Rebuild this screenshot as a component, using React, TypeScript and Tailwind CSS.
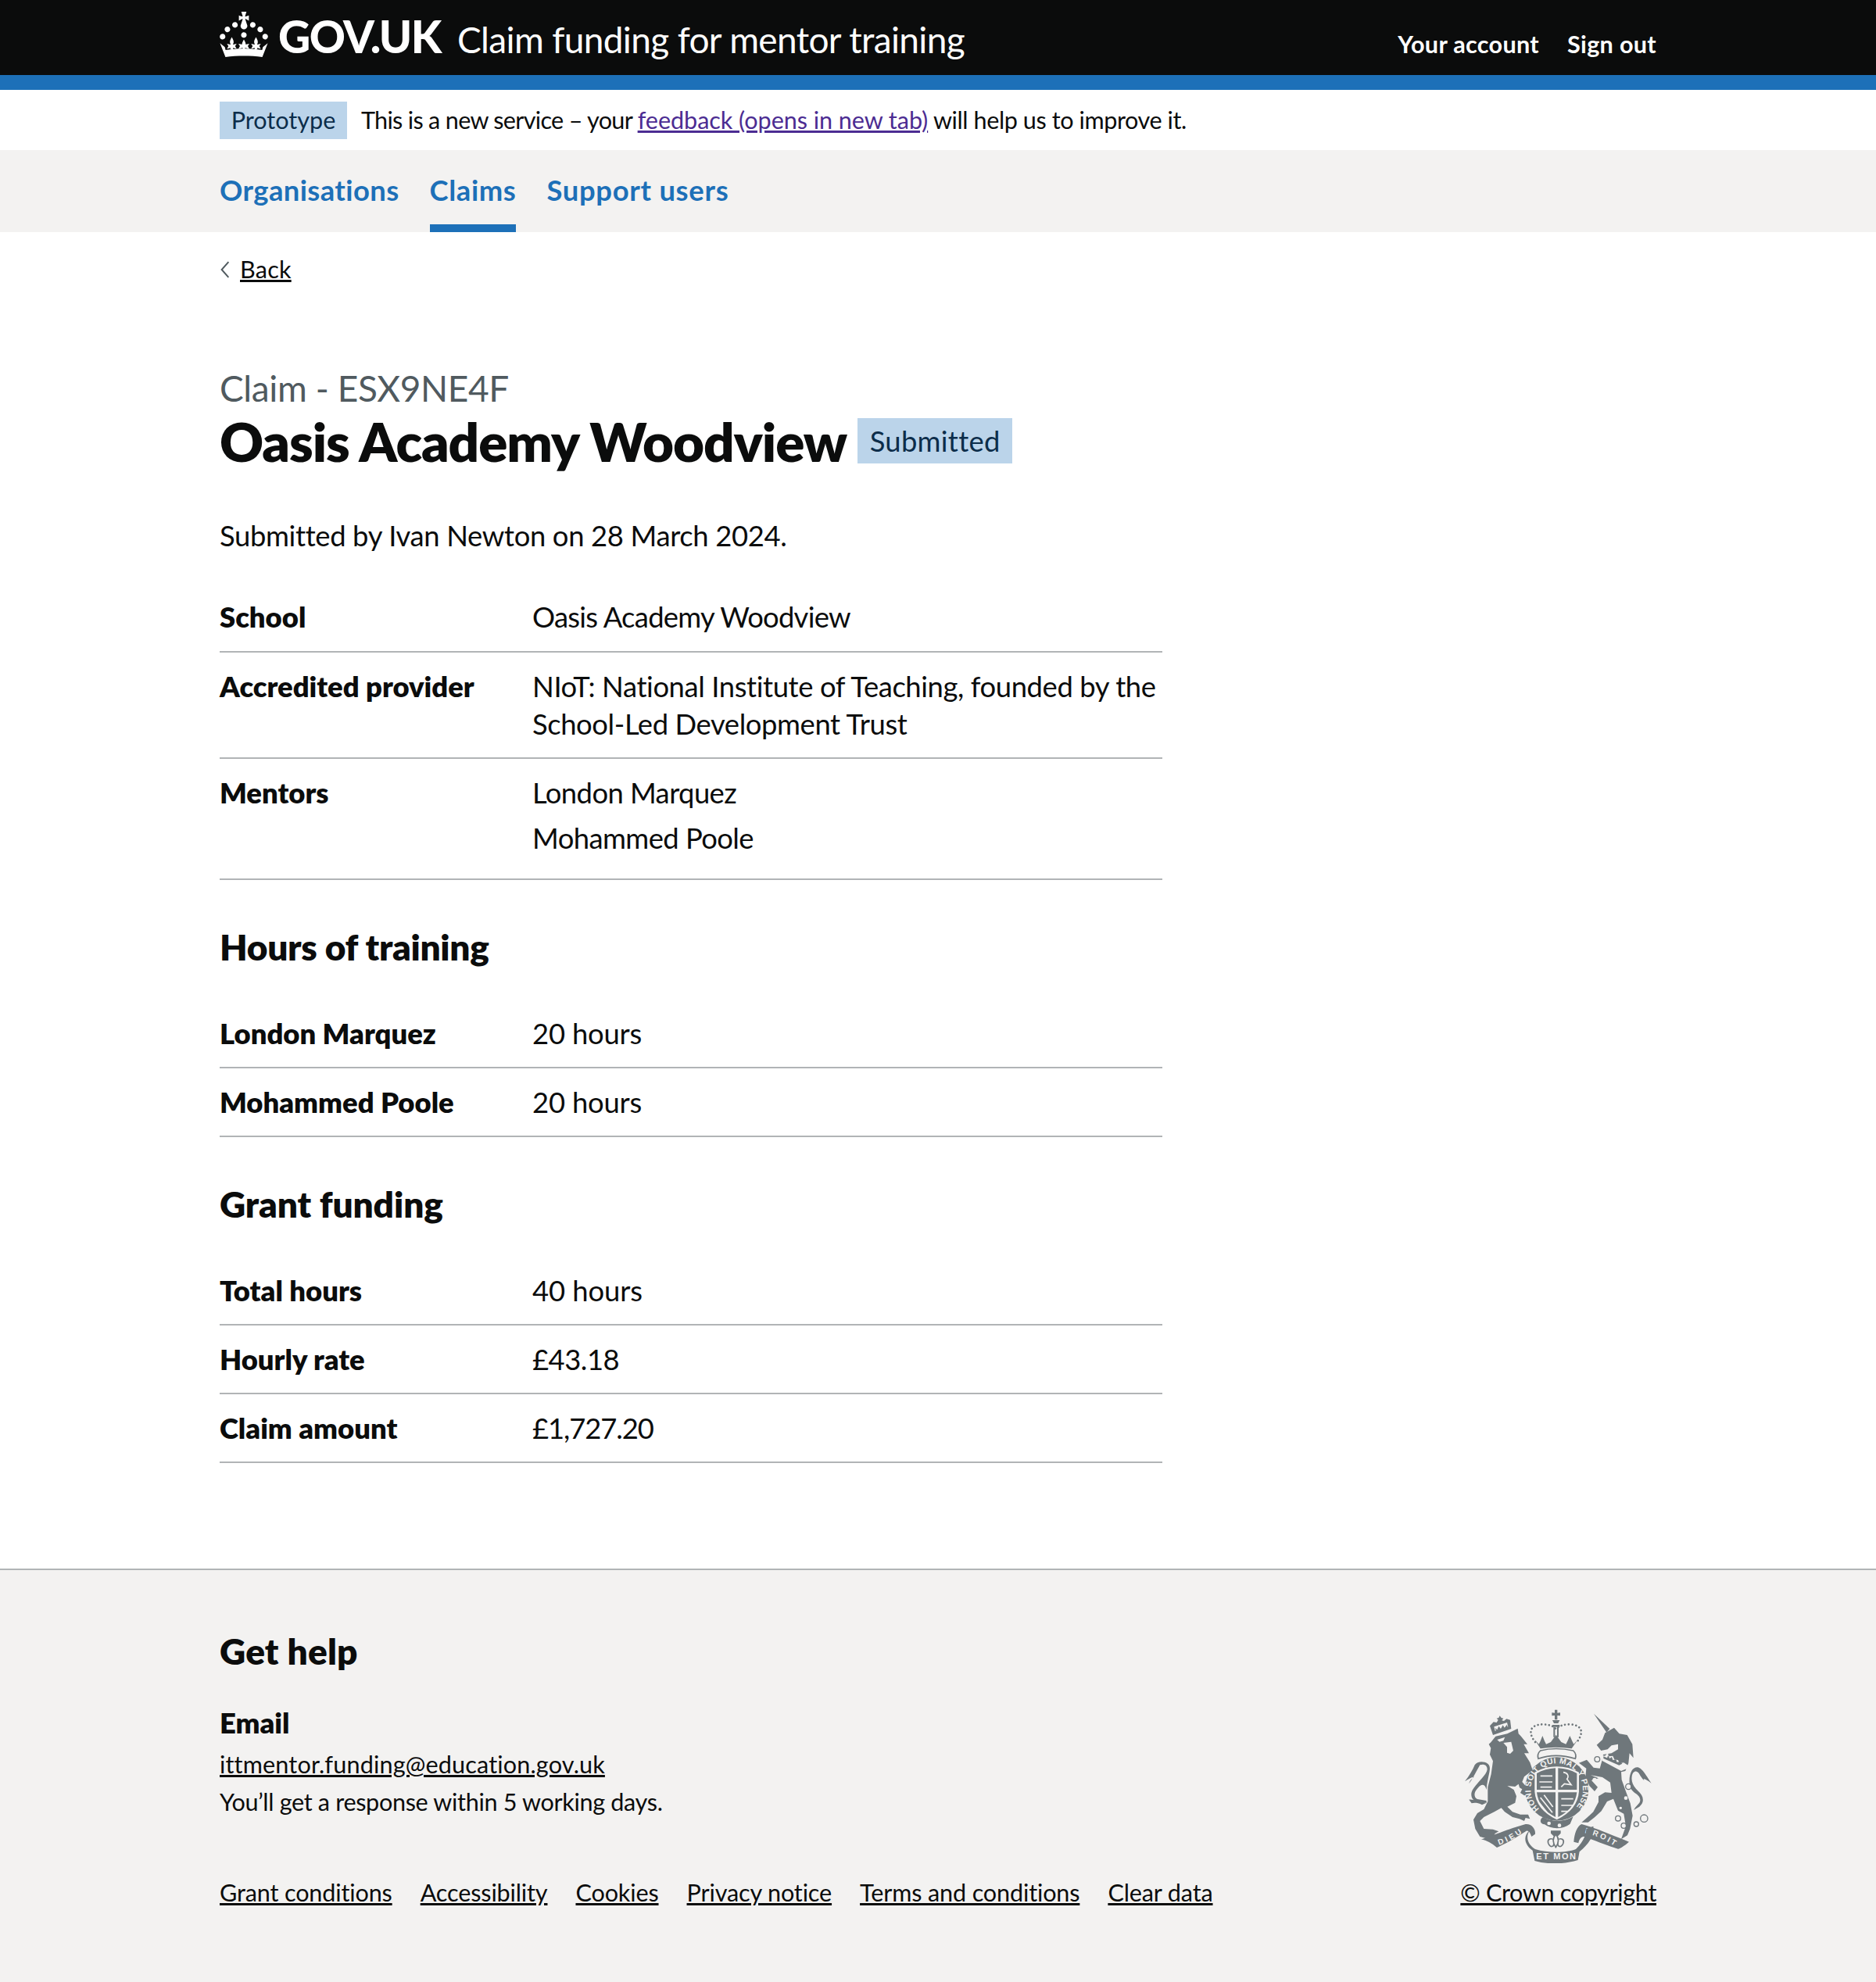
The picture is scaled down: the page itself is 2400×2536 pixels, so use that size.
import React from 'react';

function Fleur({ x, top, arm }: { x: number; top: number; arm: number }) {
  return (
    <>
      <path d={`M${x} ${top}c1 1.6 1.3 2.7 1.2 3.6-.1.6-.4 1-.5 1.4l.2 3h-1.8l.2-3c-.1-.4-.4-.8-.5-1.4-.1-.9.2-2 1.2-3.6z`} />
      <path d={`M${x - arm} 21.2l${arm - 0.9} .5h1.8l${arm - 0.9}-.5-1 1.6 1 1.8-${arm - 0.9}-.7h-1.8l-${arm - 0.9}.7 1-1.8z`} />
    </>
  );
}

function CrownLogo({ className }: { className: string }) {
  return (
    <svg viewBox="0 0 32 30" className={className} fill="#fff">
      <path d="M22.6 10.4c-1 .4-2-.1-2.4-1-.4-.9.1-2 1-2.4.9-.4 2 .1 2.4 1s-.1 2-1 2.4m-5.9 6.7c-.9.4-2-.1-2.4-1-.4-.9.1-2 1-2.4.9-.4 2 .1 2.4 1s-.1 2-1 2.4m10.8-3.7c-1 .4-2-.1-2.4-1-.4-.9.1-2 1-2.4.9-.4 2 .1 2.4 1s0 2-1 2.4m3.3 4.8c-1 .4-2-.1-2.4-1-.4-.9.1-2 1-2.4.9-.4 2 .1 2.4 1s-.1 2-1 2.4M17 4.7l2.3 1.2V2.5l-2.3.7-.2-.2.9-3h-3.4l.9 3-.2.2c-.1.1-2.3-.7-2.3-.7v3.4L15 4.7c.1.1.1.2.2.2l-1.3 4c-.1.2-.1.4-.1.6 0 1.1.8 2 1.9 2.2h.7c1-.2 1.9-1.1 1.9-2.2 0-.2 0-.4-.1-.6l-1.3-4c-.1-.1 0-.2.1-.2m-7.6 5.7c.9.4 2-.1 2.4-1 .4-.9-.1-2-1-2.4-.9-.4-2 .1-2.4 1s0 2 1 2.4m-5 3c.9.4 2-.1 2.4-1 .4-.9-.1-2-1-2.4-.9-.4-2 .1-2.4 1s.1 2 1 2.4m-3.2 4.8c.9.4 2-.1 2.4-1 .4-.9-.1-2-1-2.4-.9-.4-2 .1-2.4 1s0 2 1 2.4" />
      <Fleur x={8} top={16.8} arm={3.2} />
      <Fleur x={16} top={18.4} arm={3.6} />
      <Fleur x={24} top={16.8} arm={3.2} />
      <path d="M.2 20.8l3.2 2.6.5 1.9c8-1.2 16.2-1.2 24.2 0l.5-1.9 3.2-2.6-3.6 9.2c-8-1-16.400-1-24.400 0z" />
    </svg>
  );
}

const CREST = '#6f777b';
const PAPER = '#f3f2f1';
const CREST_FONT = 'Liberation Sans, sans-serif';

function Crest({ className }: { className: string }) {
  return (
    <svg viewBox="0 0 240 197" className={className} fill={CREST}>
      {/* lion, traced at 3x */}
      <g transform="translate(-4 3) scale(.3333)">
        <path d="M112 118L130 95L175 85L215 65L218 85L228 95L252 125L238 125L258 160L240 160L262 195L272 225L240 250L232 270L258 300L280 318L270 332L262 318L240 322L225 312L232 298L222 292L218 278L205 288L175 285L200 300L210 325L205 350L175 365L195 385L225 395L255 395L262 412L245 408L240 420L222 412L195 405L165 385L152 370L125 385L85 405L70 420L85 450L120 452L142 460L128 468L120 482L100 488L70 480L52 450L45 415L60 390L85 375L100 345L100 290L113 240L120 190L108 165L112 140L104 125z" />
        <path d="M95 300C100 240 118 215 100 200C85 190 60 190 50 205C42 225 30 245 12 268C28 258 38 252 48 250C35 262 30 268 28 276C40 262 50 240 70 205C85 200 98 205 98 222C95 245 60 270 42 300C30 320 40 345 60 345L95 350L95 342L60 336C48 330 46 315 55 302C75 275 88 275 95 300z" />
        <path d="M28 338C45 336 65 346 95 350L78 358C60 348 45 350 38 352z" />
        <path d="M120 90L108 55L122 40L134 42L140 32L134 26L142 24L146 16L152 24L160 26L154 34L162 36L172 28L186 32L190 66z" />
        <g fill={PAPER}>
          <path d="M124 58L128 74L178 58L174 42z" />
          <path d="M136 108L166 98L160 112L145 116z" />
          <path d="M160 120L190 116L198 150L186 162L174 158L174 136z" />
        </g>
        <path d="M128 62l8 8 6-14 8 10 8-14 6 10 10-12 2 10-44 14z" />
      </g>

      {/* unicorn, traced at 3x */}
      <g transform="translate(116 3) scale(.3333)">
        <path d="M147 8L208 66L196 80z" />
        <path d="M190 82L225 62L245 85L275 90L295 125L299 178L284 160L280 198L268 228L252 232L254 262L272 312L287 352L296 400L286 450L276 475L252 490L262 462L270 440L262 392L240 380L222 335L198 345L176 382L150 406L125 425L100 425L120 408L145 385L165 347L165 325L190 310L215 312L210 272L180 252L135 244L165 256L138 264L162 290L150 306L130 285L115 250L118 218L90 197L120 185L146 215L170 218L178 190L183 165L215 160L240 145L240 125L215 130L200 145L175 150L158 128L180 108z" />
        <path d="M285 288C278 235 298 208 320 215C335 222 345 240 368 275C355 266 348 260 338 258C345 272 330 255 322 240C314 225 296 225 293 250C290 270 300 288 316 304C336 322 345 345 322 365L300 378L306 368L322 350C330 338 322 322 304 312C296 305 288 298 285 288z" />
        <g fill={PAPER}>
          <path d="M178 168L190 170L200 158L205 172L220 170L226 184L240 186L246 198L262 196L278 206L276 218L252 228L178 188z" />
          <circle cx="280" cy="288" r="9" /><circle cx="270" cy="332" r="7" /><circle cx="250" cy="370" r="5" /><circle cx="160" cy="183" r="8" /><circle cx="150" cy="262" r="8" />
        </g>
        <path d="M184 172l14 6 4-10 6 12 8-6 4 12 12-2 4 10 14-2 6 8-12 6-60-26z" />
        <g fill="none" stroke={CREST} strokeWidth="4">
          <circle cx="160" cy="183" r="10" /><circle cx="280" cy="288" r="11" /><circle cx="240" cy="410" r="10" /><circle cx="262" cy="438" r="10" /><circle cx="310" cy="432" r="9" /><circle cx="340" cy="410" r="14" />
        </g>
      </g>

      {/* crown and shield, traced at 3x */}
      <g transform="translate(66 -2) scale(.3333)">
        <path d="M147 8h10v12l11-1v12l-11-1v16h-10V30l-11 1V19l11 1z" />
        <path d="M138 48h28l-6 12h-16zM142 75h6v38h-6zM156 75h6v38h-6zM138 66h28v8h-28z" />
        <path d="M72 132c-28-36-22-66 28-68 22 0 42 6 52 18 10-12 30-18 52-18 50 2 56 32 28 68" fill="none" stroke={CREST} strokeWidth="8" strokeLinecap="round" strokeDasharray="0.1 14" />
        <path d="M70 122L92 157Q150 147 212 157L236 122L220 140L214 128L205 108L196 128L190 140L172 132L152 104L132 132L114 140L108 128L100 108L92 128L86 140z" />
        <path d="M92 165Q150 150 218 165Q232 178 226 196Q150 172 84 196Q78 178 92 165z" fill={PAPER} stroke={CREST} strokeWidth="5" />

        <circle cx="155" cy="312" r="122" />
        <path id="crest-garter" d="M88 388A100 100 0 1 1 222 388" fill="none" />
        <text fill={PAPER} fontSize="31" fontWeight="700" fontFamily={CREST_FONT}>
          <textPath href="#crest-garter" textLength="470" lengthAdjust="spacing">HONI SOIT QUI MAL Y PENSE</textPath>
        </text>
        <path d="M70 248Q110 226 155 226Q200 226 240 248L240 322Q235 392 155 430Q75 392 70 322z" fill={PAPER} />
        <path d="M78 252Q110 234 150 232V315H78zM160 232Q200 234 232 252V315H160z" />
        <path d="M78 325H150V420Q85 388 78 325zM160 325H232Q225 388 160 420z" />
        <g fill="none" stroke={PAPER} strokeWidth="5">
          <path d="M92 262h46M88 285h50M92 305h44M172 350h46M172 375h44M172 398h24" />
          <path d="M180 248c18 2 22 16 14 26l16 22-26-4-12 12M92 345l46 58M106 335l34 46M88 365l30 38" />
        </g>
        <path d="M102 420C130 438 180 442 218 418L206 446C175 470 130 466 108 448C92 448 86 430 102 420z" />
        <circle cx="125" cy="444" r="7" fill={PAPER} /><circle cx="165" cy="452" r="7" fill={PAPER} />
        <path d="M132 472h38v10l-19 20-19-20z" />
        <g fill={PAPER} stroke={CREST} strokeWidth="5">
          <path d="M122 520c-4-14 8-22 24-12l-4 22c-8 6-16 2-20-10zM180 520c4-14-8-22-24-12l4 22c8 6 16 2 20-10z" />
          <path d="M151 486c12 14 14 30 0 50-14-20-12-36 0-50z" />
        </g>
      </g>

      {/* motto scroll */}
      <g transform="translate(-4 3) scale(.3333)">
        <path d="M75 490C110 480 180 450 245 432C268 430 284 450 282 470L268 480C262 462 255 455 248 458C200 490 160 510 135 522C115 505 95 495 75 490z" />
        <path id="crest-dieu" d="M143 512Q195 495 242 458" fill="none" />
        <text fill={PAPER} fontSize="30" fontWeight="700" fontFamily={CREST_FONT}>
          <textPath href="#crest-dieu" textLength="100" lengthAdjust="spacing">DIEU</textPath>
        </text>
      </g>
      <g transform="translate(116 3) scale(.3333)">
        <path d="M100 432C150 445 230 480 282 500C265 515 250 525 240 527C200 515 150 495 110 480C100 478 90 490 88 505L70 500C72 470 82 440 100 432z" />
        <path id="crest-droit" d="M112 466Q170 478 232 520" fill="none" />
        <text fill={PAPER} fontSize="30" fontWeight="700" fontFamily={CREST_FONT}>
          <textPath href="#crest-droit" textLength="125" lengthAdjust="spacing">DROIT</textPath>
        </text>
      </g>
      <g transform="translate(66 -2) scale(.3333)">
        <path d="M52 470C30 500 50 530 72 543C120 558 190 558 228 543C262 510 268 480 268 465L295 455C300 490 280 520 242 553L236 585C180 602 120 602 70 588L62 548C35 530 20 495 52 470z" />
        <text x="76" y="582" textLength="152" lengthAdjust="spacing" fill={PAPER} fontSize="33" fontWeight="700" fontFamily={CREST_FONT}>ET MON</text>
      </g>
    </svg>
  );
}

function Row({ label, height, track, children }: { label: string; height: string; track: string; children: React.ReactNode }) {
  return (
    <div className={`flex border-b-2 border-[#b1b4b6] pt-[19px] ${height}`}>
      <div className="w-[400px] shrink-0 font-extrabold">{label}</div>
      <div className={`flex-1 ${track}`}>{children}</div>
    </div>
  );
}

const FOOTER_LINKS = ['Grant conditions', 'Accessibility', 'Cookies', 'Privacy notice', 'Terms and conditions', 'Clear data'];

export default function App() {
  return (
    <div className="min-h-[2536px] bg-white font-['Lato',sans-serif] text-[36.4px] leading-[48px] text-[#0b0c0c]">
      <header className="h-[115px] border-b-[19px] border-[#1d70b8] bg-[#0b0c0c] text-white">
        <div className="mx-[281px] flex h-[96px] items-center">
          <CrownLogo className="mb-[8px] h-[58px] w-[62px] shrink-0" />
          <span className="mb-[4px] ml-[13px] text-[57px] font-black tracking-[-1.5px]">GOV.UK</span>
          <span className="ml-[21px] pt-[6px] text-[46px] tracking-[-0.64px]">Claim funding for mentor training</span>
          <div className="ml-auto flex gap-[36px] pt-[18px] text-[30.6px] font-bold tracking-[0.3px]">
            <span>Your account</span>
            <span>Sign out</span>
          </div>
        </div>
      </header>

      <div className="mx-[281px] flex h-[77px] items-center text-[30.6px]">
        <span className="flex h-[48px] w-[163px] items-center justify-center bg-[#bbd4ea] text-[#0c2d4a]">Prototype</span>
        <span className="ml-[18px] tracking-[-0.42px]">
          <span className="tracking-[-0.7px]">This is a new service – your </span>
          <a className="tracking-[-0.06px] text-[#4c2c92] underline">feedback (opens in new tab)</a> will help us to improve it.
        </span>
      </div>

      <nav className="h-[105px] bg-[#f3f2f1]">
        <div className="mx-[281px] flex h-full gap-[39px] font-bold tracking-[0.4px] text-[#1d70b8]">
          <span className="pt-[27px]">Organisations</span>
          <span className="border-b-[10px] border-[#1d70b8] pt-[27px] tracking-[0.6px]">Claims</span>
          <span className="pt-[27px] tracking-[0.7px]">Support users</span>
        </div>
      </nav>

      <main className="mx-[281px]">
        <div className="mt-[28px] flex items-center text-[30.6px] leading-[40px]">
          <svg viewBox="0 0 12 22" className="mr-[12px] h-[24px] w-[14px]" fill="none" stroke="#505a5f" strokeWidth="1.8">
            <path d="M10 2L2 11l8 9" />
          </svg>
          <a className="tracking-[0.2px] underline">Back</a>
        </div>

        <div className="mt-[105px] text-[46px] leading-[54px] tracking-[-0.4px] text-[#505a5f]">Claim - ESX9NE4F</div>
        <div className="mt-[3px] flex h-[76px] items-center">
          <h1 className="text-[69px] font-extrabold tracking-[-1.05px]">Oasis Academy Woodview</h1>
          <span className="mb-[3px] ml-[14px] flex h-[58px] w-[198px] items-center justify-center bg-[#bbd4ea] tracking-[0.3px] text-[#0c2d4a]">Submitted</span>
        </div>

        <p className="mt-[58px] tracking-[-0.35px]">Submitted by Ivan Newton on 28 March 2024.</p>

        <div className="mt-[37px] w-[1206px]">
          <Row label="School" height="h-[89px]" track="tracking-[-0.73px]">Oasis Academy Woodview</Row>
          <Row label="Accredited provider" height="h-[136px]" track="tracking-[-0.4px]">
            <span className="whitespace-nowrap">NIoT: National Institute of Teaching, founded by the</span>
            <br />
            School-Led Development Trust
          </Row>
          <Row label="Mentors" height="h-[155px]" track="tracking-[-0.57px]">
            <p>London Marquez</p>
            <p className="mt-[10px]">Mohammed Poole</p>
          </Row>

          <h2 className="mt-[59px] text-[46px] leading-[54px] font-extrabold tracking-[-0.3px]">Hours of training</h2>
          <div className="mt-[40px]">
            <Row label="London Marquez" height="h-[88px]" track="tracking-[-0.2px]">20 hours</Row>
            <Row label="Mohammed Poole" height="h-[88px]" track="tracking-[-0.2px]">20 hours</Row>
          </div>

          <h2 className="mt-[59px] text-[46px] leading-[54px] font-extrabold tracking-[-0.1px]">Grant funding</h2>
          <div className="mt-[40px]">
            <Row label="Total hours" height="h-[88px]" track="tracking-[-0.1px]">40 hours</Row>
            <Row label="Hourly rate" height="h-[88px]" track="tracking-[-0.5px]">£43.18</Row>
            <Row label="Claim amount" height="h-[88px]" track="tracking-[-1.1px]">£1,727.20</Row>
          </div>
        </div>
      </main>

      <footer className="mt-[135px] h-[529px] border-t-2 border-[#b1b4b6] bg-[#f3f2f1]">
        <div className="mx-[281px] flex items-end justify-between pt-[77px] text-[30.6px] leading-[40px]">
          <div>
            <h2 className="text-[46px] leading-[54px] font-extrabold tracking-[0.2px]">Get help</h2>
            <div className="mt-[40px] text-[36.4px] leading-[48px] font-extrabold">Email</div>
            <a className="mt-[10px] block tracking-[0.15px] underline">ittmentor.funding@education.gov.uk</a>
            <p className="mt-[8px] tracking-[-0.33px]">You’ll get a response within 5 working days.</p>
            <div className="mt-[76px] flex gap-[36px] tracking-[-0.15px]">
              {FOOTER_LINKS.map((l) => (
                <a key={l} className="underline">{l}</a>
              ))}
            </div>
          </div>
          <div className="flex flex-col items-center">
            <Crest className="h-[197px] w-[240px]" />
            <a className="mt-[18px] tracking-[-0.35px] underline">© Crown copyright</a>
          </div>
        </div>
      </footer>
    </div>
  );
}
